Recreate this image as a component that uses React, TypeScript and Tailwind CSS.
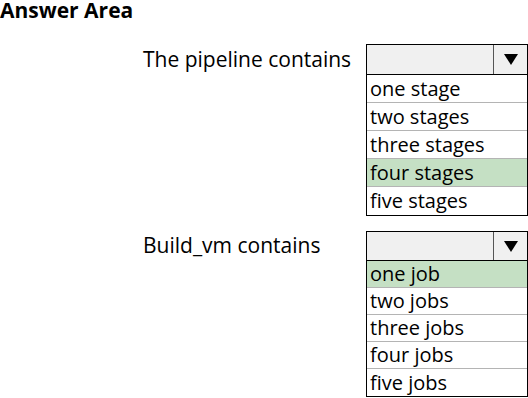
const font = { fontFamily: '"Open Sans", "Liberation Sans", sans-serif' };

type DropdownProps = {
  label: string;
  options: string[];
  selected: number;
  compact?: boolean;
};

function Dropdown({ label, options, selected, compact }: DropdownProps) {
  return (
    <div className="flex">
      <div
        className={
          "flex w-[223px] items-center text-[21px] leading-none text-black " +
          (compact ? "h-[28px]" : "h-[31px]")
        }
      >
        {label}
      </div>
      <div className="w-[162px] border border-black">
        <div
          className={
            "flex border-b border-black bg-[#f0f0f0] " + (compact ? "h-[29px]" : "h-[30px]")
          }
        >
          <div className="flex-1" />
          <div className="flex w-[34px] items-center justify-center border-l border-[#555]">
            <svg width="14" height="11" viewBox="0 0 14 11">
              <polygon points="0,0 14,0 7,11" fill="#000" />
            </svg>
          </div>
        </div>
        {options.map((o, i) => (
          <div
            key={o}
            className={
              "flex items-center px-[3px] text-[20px] leading-none text-black " +
              (compact ? "h-[27px] " : "h-[28px] ") +
              (i < options.length - 1 ? "border-b border-[#b4b4b4] " : "") +
              (i === selected ? "bg-[#c5e0c4]" : "bg-white")
            }
          >
            {o}
          </div>
        ))}
      </div>
    </div>
  );
}

export default function App() {
  return (
    <div className="h-[398px] w-[528px] overflow-hidden bg-white" style={font}>
      <div className="h-[44px] text-[21px] font-bold leading-[20px] text-black">Answer Area</div>
      <div className="flex flex-col gap-[15px] pl-[143px]">
        <Dropdown
          label="The pipeline contains"
          options={["one stage", "two stages", "three stages", "four stages", "five stages"]}
          selected={3}
        />
        <Dropdown
          label="Build_vm contains"
          options={["one job", "two jobs", "three jobs", "four jobs", "five jobs"]}
          selected={0}
          compact
        />
      </div>
    </div>
  );
}
